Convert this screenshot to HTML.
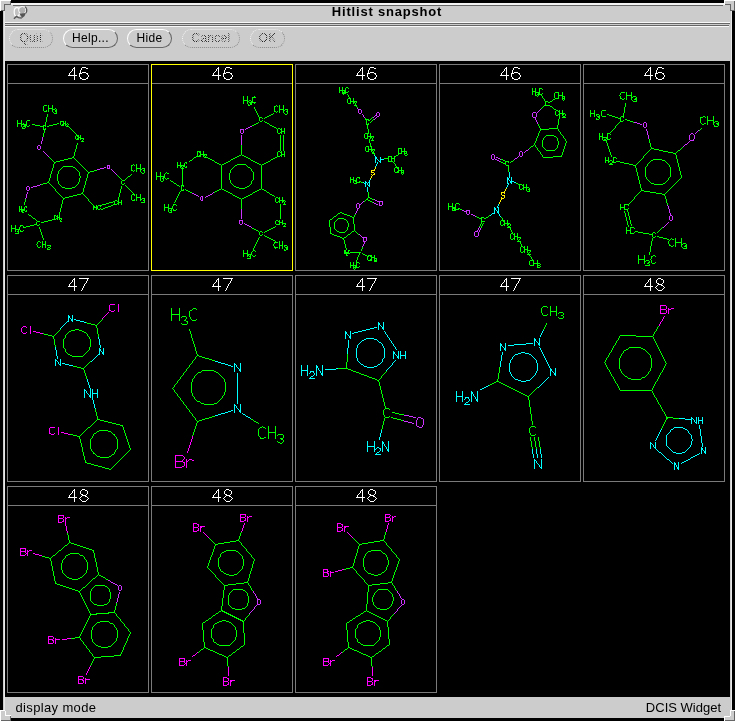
<!DOCTYPE html>
<html><head><meta charset="utf-8"><title>Hitlist snapshot</title>
<style>
html,body{margin:0;padding:0;}
body{width:735px;height:721px;overflow:hidden;background:#000;position:relative;font-family:"Liberation Sans",sans-serif;}
#win{position:absolute;left:3px;top:3px;width:729px;height:715px;background:#cccccc;}
.corner{position:absolute;width:11px;height:11px;background:#cccccc;}
#title{will-change:transform;position:absolute;left:39px;top:4px;width:696px;height:16px;text-align:center;font-weight:bold;font-size:13px;line-height:16px;letter-spacing:0.8px;color:#000;}
.hl{position:absolute;height:1px;}
.btn{will-change:transform;position:absolute;top:29px;height:17px;border-radius:10px;border:1px solid;border-color:#fff #666 #666 #fff;font-size:12px;line-height:17px;text-align:center;color:#000;letter-spacing:0.3px;}
.btn.dis{border-style:dotted;border-color:#f4f4f4 #888 #888 #f4f4f4;}
.btn.dis span{color:transparent;background-image:conic-gradient(#222 25%,#ccc 0 50%,#222 0 75%,#ccc 0);background-size:2px 2px;-webkit-background-clip:text;background-clip:text;}
#canvas{position:absolute;left:5px;top:61px;width:725px;height:636px;background:#000;}
#status{position:absolute;left:3px;top:698px;width:729px;height:20px;font-size:13px;line-height:20px;color:#000;will-change:transform;}
svg{position:absolute;left:0;top:0;}
svg path,svg rect,svg circle{fill:none;shape-rendering:crispEdges;}
svg text{font-family:"Liberation Sans",sans-serif;font-size:18px;fill:#fff;text-anchor:middle;}
</style></head><body>
<div id="win"></div>
<div class="hl" style="left:11px;top:3px;width:713px;height:2px;background:#f4f4f4"></div>
<div class="hl" style="left:13px;top:5px;width:710px;background:#666"></div>
<div class="hl" style="left:3px;top:11px;width:1px;height:700px;background:#ccc"></div>
<div class="hl" style="left:4px;top:11px;width:1px;height:700px;background:#e8e8e8"></div>
<div class="hl" style="left:731px;top:11px;width:1px;height:700px;background:#e8e8e8"></div>
<svg width="735" height="721" viewBox="0 0 735 721" style="z-index:3">
<g id="corners">
<path d="M0 0H11V5H5V11H0Z" style="fill:#cccccc;stroke:none"/>
<path d="M0.5 11V0.5H11" stroke="#fff"/><path d="M10.5 1V4.5H4.5V10.5H1" stroke="#666"/>
<path d="M735 0H724V5H730V11H735Z" style="fill:#cccccc;stroke:none"/>
<path d="M724.5 5V0.5H735" stroke="#fff"/><path d="M725 4.5H730.5V10.5" stroke="#666"/><path d="M734.5 1V11" stroke="#666"/><path d="M731 10.5H735" stroke="#666"/>
<path d="M0 721H11V716H5V710H0Z" style="fill:#cccccc;stroke:none"/>
<path d="M0.5 721V710.5H5" stroke="#fff"/><path d="M5.5 711V715.5H11" stroke="#fff"/><path d="M1 720.5H11" stroke="#666"/><path d="M10.5 716V721" stroke="#666"/>
<path d="M735 721H724V716H730V710H735Z" style="fill:#cccccc;stroke:none"/>
<path d="M730.5 716V710.5H735" stroke="#fff"/><path d="M724.5 721V716.5H730" stroke="#fff"/><path d="M725 720.5H735" stroke="#666"/><path d="M734.5 711V721" stroke="#666"/>
</g>
</svg>
<div id="title">Hitlist snapshot</div>
<svg width="735" height="30" viewBox="0 0 735 30" style="z-index:4">
<g style="shape-rendering:auto">
<ellipse cx="16.9" cy="12" rx="2.7" ry="4.3" style="fill:#c2c2c2;stroke:#fff;stroke-width:1.2;shape-rendering:auto"/>
<circle cx="22.3" cy="10.2" r="3.7" style="fill:#b0b0b0;stroke:#fff;stroke-width:1;shape-rendering:auto"/>
<path d="M25 6.8A4.4 4.4 0 0 1 25.9 13" style="stroke:#555;stroke-width:1.3;shape-rendering:auto"/>
<path d="M19.4 13.4L25.9 13L24.6 16L22.2 17.9L20.6 15.6Z" style="fill:#555;stroke:none;shape-rendering:auto"/>
<path d="M13.9 18.7L16.5 16.4L18.5 17.6L21.8 18" style="stroke:#555;stroke-width:1.4;shape-rendering:auto"/>
</g>
</svg>
<div class="hl" style="left:5px;top:22px;width:725px;background:#f8f8f8"></div>
<div class="hl" style="left:5px;top:23px;width:725px;background:#666"></div>
<div class="hl" style="left:5px;top:25px;width:724px;background:#666"></div>
<div class="hl" style="left:5px;top:26px;width:724px;background:#f8f8f8"></div>
<div class="btn dis" style="left:9px;width:42px;"><span>Quit</span></div>
<div class="btn" style="left:63px;width:53px;">Help...</div>
<div class="btn" style="left:127px;width:43px;">Hide</div>
<div class="btn dis" style="left:182px;width:56px;"><span>Cancel</span></div>
<div class="btn dis" style="left:250px;width:33px;"><span>OK</span></div>
<div id="canvas"></div>
<div id="status"><span style="position:absolute;left:12.5px;top:0;letter-spacing:0.35px">display mode</span><span style="position:absolute;right:11px;top:0;">DCIS Widget</span></div>
<svg width="735" height="721" viewBox="0 0 735 721" style="z-index:2">
<g id="frames">
<rect x="7.5" y="64.5" width="141" height="206" stroke="#7a7a7a"/>
<path d="M7 83.5H149" stroke="#7a7a7a"/>
<rect x="151.5" y="64.5" width="141" height="206" stroke="#ffff00"/>
<path d="M152 83.5H292" stroke="#7a7a7a"/>
<rect x="295.5" y="64.5" width="141" height="206" stroke="#7a7a7a"/>
<path d="M295 83.5H437" stroke="#7a7a7a"/>
<rect x="439.5" y="64.5" width="141" height="206" stroke="#7a7a7a"/>
<path d="M439 83.5H581" stroke="#7a7a7a"/>
<rect x="583.5" y="64.5" width="141" height="206" stroke="#7a7a7a"/>
<path d="M583 83.5H725" stroke="#7a7a7a"/>
<rect x="7.5" y="275.5" width="141" height="206" stroke="#7a7a7a"/>
<path d="M7 294.5H149" stroke="#7a7a7a"/>
<rect x="151.5" y="275.5" width="141" height="206" stroke="#7a7a7a"/>
<path d="M151 294.5H293" stroke="#7a7a7a"/>
<rect x="295.5" y="275.5" width="141" height="206" stroke="#7a7a7a"/>
<path d="M295 294.5H437" stroke="#7a7a7a"/>
<rect x="439.5" y="275.5" width="141" height="206" stroke="#7a7a7a"/>
<path d="M439 294.5H581" stroke="#7a7a7a"/>
<rect x="583.5" y="275.5" width="141" height="206" stroke="#7a7a7a"/>
<path d="M583 294.5H725" stroke="#7a7a7a"/>
<rect x="7.5" y="486.5" width="141" height="206" stroke="#7a7a7a"/>
<path d="M7 505.5H149" stroke="#7a7a7a"/>
<rect x="151.5" y="486.5" width="141" height="206" stroke="#7a7a7a"/>
<path d="M151 505.5H293" stroke="#7a7a7a"/>
<rect x="295.5" y="486.5" width="141" height="206" stroke="#7a7a7a"/>
<path d="M295 505.5H437" stroke="#7a7a7a"/>
</g>
<g id="headers">
<path stroke="#ffffff" d="M82 67.5h4M226 67.5h4M370 67.5h4M514 67.5h4M658 67.5h4M73 68.5h2M86 68.5h2M217 68.5h2M230 68.5h2M361 68.5h2M374 68.5h2M505 68.5h2M518 68.5h2M649 68.5h2M662 68.5h2M82 72.5h4M226 72.5h4M370 72.5h4M514 72.5h4M658 72.5h4M79 73.5h3M86 73.5h2M223 73.5h3M230 73.5h2M367 73.5h3M374 73.5h2M511 73.5h3M518 73.5h2M655 73.5h3M662 73.5h2M68 75.5h9M212 75.5h9M356 75.5h9M500 75.5h9M644 75.5h9M80 78.5h2M86 78.5h2M224 78.5h2M230 78.5h2M368 78.5h2M374 78.5h2M512 78.5h2M518 78.5h2M656 78.5h2M662 78.5h2M82 79.5h4M226 79.5h4M370 79.5h4M514 79.5h4M658 79.5h4M79 278.5h10M223 278.5h10M367 278.5h10M511 278.5h10M658 278.5h3M73 279.5h2M217 279.5h2M361 279.5h2M505 279.5h2M649 279.5h2M661 279.5h2M657 283.5h2M658 284.5h4M661 285.5h2M68 286.5h9M212 286.5h9M356 286.5h9M500 286.5h9M644 286.5h9M658 290.5h4M82 489.5h3M226 489.5h3M370 489.5h3M73 490.5h2M85 490.5h2M217 490.5h2M229 490.5h2M361 490.5h2M373 490.5h2M81 494.5h2M225 494.5h2M369 494.5h2M82 495.5h4M226 495.5h4M370 495.5h4M85 496.5h2M229 496.5h2M373 496.5h2M68 497.5h9M212 497.5h9M356 497.5h9M82 501.5h4M226 501.5h4M370 501.5h4M69.5 73v2M69.5 284v2M69.5 495v2M70.5 72v1M70.5 283v1M70.5 494v1M71.5 71v1M71.5 282v1M71.5 493v1M72.5 69v2M72.5 280v2M72.5 491v2M74.5 67v1M74.5 69v6M74.5 76v4M74.5 278v1M74.5 280v6M74.5 287v4M74.5 489v1M74.5 491v6M74.5 498v4M79.5 74v3M79.5 498v1M80.5 70v3M80.5 77v1M80.5 491v3M80.5 497v1M80.5 499v1M81.5 68v2M81.5 290v1M81.5 490v1M81.5 496v1M81.5 500v1M82.5 288v2M83.5 286v2M84.5 284v2M85.5 283v1M86.5 281v2M86.5 494v1M86.5 500v1M87.5 74v1M87.5 77v1M87.5 279v2M87.5 491v3M87.5 497v1M87.5 499v1M88.5 75v2M88.5 498v1M213.5 73v2M213.5 284v2M213.5 495v2M214.5 72v1M214.5 283v1M214.5 494v1M215.5 71v1M215.5 282v1M215.5 493v1M216.5 69v2M216.5 280v2M216.5 491v2M218.5 67v1M218.5 69v6M218.5 76v4M218.5 278v1M218.5 280v6M218.5 287v4M218.5 489v1M218.5 491v6M218.5 498v4M223.5 74v3M223.5 498v1M224.5 70v3M224.5 77v1M224.5 491v3M224.5 497v1M224.5 499v1M225.5 68v2M225.5 290v1M225.5 490v1M225.5 496v1M225.5 500v1M226.5 288v2M227.5 286v2M228.5 284v2M229.5 283v1M230.5 281v2M230.5 494v1M230.5 500v1M231.5 74v1M231.5 77v1M231.5 279v2M231.5 491v3M231.5 497v1M231.5 499v1M232.5 75v2M232.5 498v1M357.5 73v2M357.5 284v2M357.5 495v2M358.5 72v1M358.5 283v1M358.5 494v1M359.5 71v1M359.5 282v1M359.5 493v1M360.5 69v2M360.5 280v2M360.5 491v2M362.5 67v1M362.5 69v6M362.5 76v4M362.5 278v1M362.5 280v6M362.5 287v4M362.5 489v1M362.5 491v6M362.5 498v4M367.5 74v3M367.5 498v1M368.5 70v3M368.5 77v1M368.5 491v3M368.5 497v1M368.5 499v1M369.5 68v2M369.5 290v1M369.5 490v1M369.5 496v1M369.5 500v1M370.5 288v2M371.5 286v2M372.5 284v2M373.5 283v1M374.5 281v2M374.5 494v1M374.5 500v1M375.5 74v1M375.5 77v1M375.5 279v2M375.5 491v3M375.5 497v1M375.5 499v1M376.5 75v2M376.5 498v1M501.5 73v2M501.5 284v2M502.5 72v1M502.5 283v1M503.5 71v1M503.5 282v1M504.5 69v2M504.5 280v2M506.5 67v1M506.5 69v6M506.5 76v4M506.5 278v1M506.5 280v6M506.5 287v4M511.5 74v3M512.5 70v3M512.5 77v1M513.5 68v2M513.5 290v1M514.5 288v2M515.5 286v2M516.5 284v2M517.5 283v1M518.5 281v2M519.5 74v1M519.5 77v1M519.5 279v2M520.5 75v2M645.5 73v2M645.5 284v2M646.5 72v1M646.5 283v1M647.5 71v1M647.5 282v1M648.5 69v2M648.5 280v2M650.5 67v1M650.5 69v6M650.5 76v4M650.5 278v1M650.5 280v6M650.5 287v4M655.5 74v3M655.5 287v1M656.5 70v3M656.5 77v1M656.5 280v3M656.5 286v1M656.5 288v1M657.5 68v2M657.5 279v1M657.5 285v1M657.5 289v1M662.5 283v1M662.5 289v1M663.5 74v1M663.5 77v1M663.5 280v3M663.5 286v1M663.5 288v1M664.5 75v2M664.5 287v1"/>
</g>
<g id="molecules">
<path stroke="#00ff00" d="M44 105.5h3M48 108.5h5M52 109.5h3M55 110.5h2M44 111.5h3M55 111.5h2M54 113.5h3M27 120.5h3M60 121.5h4M17 123.5h5M57 123.5h2M63 123.5h3M21 124.5h6M32 124.5h3M53 124.5h4M62 124.5h2M65 124.5h2M24 125.5h3M35 125.5h5M43 125.5h3M49 125.5h4M61 125.5h3M23 126.5h3M27 126.5h2M40 126.5h4M47 126.5h2M66 126.5h3M22 128.5h3M43 129.5h3M76 135.5h3M77 136.5h2M78 137.5h3M77 138.5h2M80 138.5h4M76 139.5h3M81 141.5h3M72 157.5h2M68 158.5h4M64 159.5h4M60 160.5h4M56 161.5h4M54 162.5h2M131 165.5h2M63 166.5h10M73 167.5h2M136 168.5h5M142 168.5h3M140 169.5h2M94 170.5h3M131 170.5h2M143 170.5h2M90 171.5h4M88 172.5h2M142 173.5h2M128 176.5h2M122 180.5h3M47 182.5h2M43 183.5h4M41 184.5h2M122 184.5h2M62 187.5h3M72 187.5h3M65 188.5h7M81 193.5h2M77 194.5h4M132 194.5h3M73 195.5h4M69 196.5h4M65 197.5h4M136 197.5h5M63 198.5h2M142 198.5h3M140 199.5h2M115 200.5h2M132 200.5h3M143 200.5h2M113 201.5h2M117 201.5h2M109 202.5h4M118 202.5h4M141 202.5h4M106 203.5h3M117 203.5h2M102 204.5h4M113 204.5h4M98 205.5h4M111 205.5h2M25 206.5h2M93 206.5h2M96 206.5h2M108 206.5h3M93 207.5h5M105 207.5h3M96 208.5h2M103 208.5h2M19 209.5h6M98 209.5h2M101 209.5h2M21 210.5h4M21 211.5h2M25 211.5h2M22 212.5h2M29 215.5h2M54 215.5h2M56 216.5h2M57 217.5h3M33 218.5h2M56 218.5h2M59 218.5h3M52 219.5h4M48 220.5h4M37 221.5h3M44 221.5h4M60 221.5h2M41 222.5h3M34 224.5h3M20 225.5h3M30 225.5h4M37 225.5h2M26 226.5h4M23 227.5h3M11 228.5h5M15 229.5h5M17 231.5h2M20 231.5h3M15 233.5h4M38 241.5h2M42 244.5h4M47 245.5h4M38 247.5h2M48 247.5h2M47 249.5h3M11.5 225v3M11.5 229v3M15.5 225v3M15.5 230v2M17.5 120v3M17.5 124v3M18.5 230v1M18.5 232v1M19.5 206v3M19.5 210v2M19.5 227v2M20.5 226v1M20.5 230v1M21.5 120v3M21.5 125v2M21.5 206v3M22.5 127v1M23.5 123v1M23.5 226v1M23.5 230v1M24.5 202v3M24.5 207v2M25.5 127v1M25.5 199v3M26.5 121v3M26.5 207v1M26.5 210v1M28.5 214v1M29.5 125v1M31.5 216v1M32.5 217v1M35.5 219v1M36.5 220v1M36.5 222v2M36.5 244v1M37.5 242v2M37.5 245v2M39.5 224v1M39.5 227v2M40.5 229v3M40.5 242v1M40.5 246v1M41.5 232v3M42.5 235v3M42.5 241v3M42.5 245v3M43.5 106v5M43.5 127v2M43.5 133v4M43.5 238v2M44.5 130v3M45.5 122v3M45.5 126v1M45.5 128v1M45.5 241v3M45.5 245v3M46.5 110v1M46.5 117v5M47.5 114v3M47.5 248v1M48.5 105v3M48.5 109v3M48.5 181v1M49.5 157v1M49.5 178v3M49.5 183v1M50.5 158v1M50.5 174v4M50.5 184v1M50.5 246v1M50.5 248v1M51.5 159v1M51.5 171v3M51.5 185v1M52.5 105v3M52.5 110v2M52.5 160v1M52.5 168v3M52.5 186v1M53.5 112v1M53.5 161v1M53.5 164v4M53.5 187v1M54.5 163v1M54.5 188v1M54.5 216v3M55.5 108v1M55.5 189v2M56.5 109v1M56.5 112v1M56.5 191v1M57.5 174v7M57.5 192v1M57.5 215v1M57.5 219v1M58.5 171v3M58.5 181v3M58.5 193v1M59.5 170v1M59.5 184v1M59.5 194v1M59.5 212v5M59.5 219v1M60.5 122v3M60.5 169v1M60.5 185v1M60.5 195v1M60.5 208v4M60.5 220v1M61.5 168v1M61.5 186v1M61.5 196v1M61.5 204v4M61.5 219v1M62.5 167v1M62.5 197v1M62.5 200v4M63.5 122v1M63.5 199v1M65.5 121v2M65.5 125v1M67.5 123v1M67.5 125v1M68.5 124v1M69.5 127v1M70.5 128v1M71.5 129v1M72.5 130v1M73.5 131v1M73.5 156v1M74.5 132v1M74.5 152v4M74.5 158v1M75.5 133v1M75.5 136v3M75.5 149v3M75.5 159v1M75.5 168v1M75.5 186v1M76.5 134v1M76.5 145v4M76.5 160v1M76.5 169v1M76.5 185v1M77.5 143v2M77.5 161v1M77.5 170v1M77.5 184v1M78.5 162v1M78.5 171v1M78.5 182v2M79.5 163v1M79.5 172v4M79.5 178v4M80.5 135v2M80.5 139v1M80.5 164v1M80.5 176v2M81.5 165v1M82.5 140v1M82.5 166v1M82.5 192v1M83.5 139v1M83.5 167v1M83.5 188v4M83.5 194v1M84.5 168v1M84.5 185v3M84.5 195v1M85.5 169v1M85.5 181v4M85.5 196v1M86.5 170v1M86.5 178v3M86.5 197v1M87.5 171v1M87.5 174v4M87.5 198v1M88.5 173v1M88.5 199v2M89.5 201v1M90.5 202v1M91.5 203v1M92.5 204v1M93.5 205v1M93.5 208v2M96.5 205v1M96.5 209v1M100.5 206v1M100.5 208v1M114.5 202v2M117.5 175v1M118.5 176v1M118.5 197v4M118.5 204v1M119.5 177v1M119.5 193v4M120.5 178v1M120.5 189v4M121.5 179v1M121.5 181v3M121.5 186v3M121.5 200v2M121.5 203v2M124.5 183v1M125.5 179v1M125.5 185v1M126.5 178v1M126.5 186v1M127.5 177v1M127.5 187v1M128.5 188v1M129.5 189v1M130.5 175v1M130.5 190v1M131.5 166v4M131.5 174v1M131.5 191v1M131.5 195v5M132.5 192v1M133.5 164v1M133.5 171v1M133.5 193v1M134.5 165v1M134.5 170v1M134.5 195v1M134.5 199v1M136.5 164v4M136.5 169v3M136.5 194v3M136.5 198v3M140.5 164v4M140.5 170v2M140.5 194v3M140.5 198v1M140.5 200v1M141.5 172v1M144.5 169v1M144.5 171v2M144.5 199v1M144.5 201v1"/>
<path stroke="#cc33ff" d="M38 145.5h2M38 149.5h2M107 165.5h3M104 167.5h2M100 168.5h4M107 168.5h3M97 169.5h3M37 185.5h3M27 186.5h2M33 186.5h4M31 187.5h2M27 190.5h2M25.5 198v1M26.5 187v3M26.5 194v4M27.5 192v2M29.5 187v3M37.5 146v3M40.5 146v3M40.5 184v1M41.5 141v3M42.5 137v4M43.5 151v1M44.5 152v1M45.5 153v1M46.5 154v1M47.5 155v1M48.5 156v1M107.5 166v2M109.5 166v2M111.5 169v1M112.5 170v1M113.5 171v1M114.5 172v1M115.5 173v1M116.5 174v1"/>
<path stroke="#00ff00" d="M252 97.5h4M243 100.5h5M249 100.5h2M247 101.5h2M251 101.5h2M249 102.5h7M250 103.5h2M250 104.5h2M248 105.5h2M274 106.5h2M279 109.5h5M285 109.5h3M283 110.5h2M274 111.5h2M286 111.5h2M271 114.5h2M285 114.5h2M269 115.5h2M267 116.5h2M259 117.5h3M265 117.5h2M260 121.5h2M265 122.5h2M256 123.5h2M267 123.5h2M254 124.5h2M252 125.5h2M270 125.5h2M272 126.5h2M274 127.5h2M278 128.5h2M280 129.5h2M281 131.5h4M280 132.5h2M278 133.5h2M197 151.5h4M278 151.5h2M199 152.5h2M280 152.5h2M200 154.5h7M281 154.5h4M199 155.5h2M203 155.5h2M239 155.5h2M242 155.5h2M280 155.5h2M196 156.5h5M237 156.5h2M244 156.5h2M277 156.5h3M194 157.5h2M204 157.5h4M235 157.5h2M246 157.5h2M275 157.5h2M208 158.5h2M233 158.5h2M248 158.5h2M273 158.5h2M210 159.5h2M231 159.5h2M271 159.5h2M190 160.5h2M212 160.5h2M251 160.5h2M228 161.5h2M253 161.5h2M268 161.5h2M185 162.5h2M215 162.5h2M226 162.5h2M255 162.5h2M266 162.5h2M217 163.5h2M224 163.5h2M257 163.5h2M264 163.5h2M219 164.5h2M222 164.5h2M237 164.5h9M259 164.5h2M262 164.5h2M177 165.5h8M235 165.5h2M180 166.5h2M183 166.5h2M185 167.5h2M248 167.5h2M181 168.5h3M167 173.5h2M156 176.5h9M163 177.5h2M162 178.5h2M167 178.5h2M161 181.5h2M171 181.5h2M174 183.5h2M177 185.5h2M181 185.5h3M234 186.5h2M247 186.5h2M236 187.5h3M245 187.5h2M239 188.5h6M219 189.5h2M222 189.5h2M259 189.5h2M262 189.5h2M181 190.5h3M186 190.5h2M217 190.5h2M224 190.5h2M257 190.5h2M264 190.5h2M188 191.5h2M215 191.5h2M226 191.5h2M255 191.5h2M190 192.5h2M228 192.5h2M253 192.5h2M267 192.5h2M230 193.5h2M250 194.5h2M270 194.5h2M233 195.5h2M248 195.5h2M272 195.5h2M235 196.5h2M246 196.5h2M237 197.5h2M244 197.5h2M276 197.5h2M239 198.5h2M242 198.5h2M278 198.5h2M279 200.5h6M278 201.5h2M282 201.5h2M276 202.5h2M173 204.5h3M283 204.5h3M164 207.5h5M168 208.5h5M170 210.5h2M173 210.5h3M169 212.5h3M276 220.5h2M278 221.5h2M279 222.5h4M282 223.5h4M276 224.5h4M283 226.5h3M273 227.5h2M252 228.5h2M271 228.5h2M254 229.5h2M269 229.5h2M256 230.5h2M267 230.5h2M260 231.5h2M265 231.5h2M260 235.5h2M265 236.5h2M267 237.5h2M269 238.5h2M271 239.5h2M273 240.5h2M274 242.5h4M279 245.5h4M284 245.5h3M274 247.5h4M285 247.5h3M286 248.5h2M286 249.5h2M253 250.5h2M284 250.5h2M243 253.5h5M247 254.5h5M247 255.5h2M249 256.5h2M253 256.5h2M247 258.5h4M156.5 172v4M156.5 177v3M160.5 172v4M160.5 177v4M163.5 179v2M164.5 174v2M164.5 204v3M164.5 208v3M165.5 173v1M165.5 178v1M166.5 172v1M166.5 179v1M168.5 204v3M168.5 209v3M170.5 180v1M171.5 209v1M171.5 211v1M172.5 206v2M173.5 182v1M173.5 205v1M173.5 209v1M174.5 202v1M175.5 200v2M176.5 184v1M176.5 198v2M176.5 205v1M176.5 209v1M177.5 162v3M177.5 166v2M177.5 196v2M178.5 194v2M179.5 186v1M179.5 192v2M180.5 162v3M180.5 167v1M180.5 191v1M181.5 186v4M182.5 167v1M182.5 169v16M183.5 186v1M183.5 189v1M184.5 163v2M185.5 189v1M186.5 163v1M186.5 166v1M189.5 161v1M192.5 159v1M193.5 158v1M197.5 152v4M200.5 153v1M203.5 151v3M203.5 156v1M205.5 156v1M206.5 155v1M214.5 161v1M214.5 192v1M221.5 165v24M229.5 173v7M230.5 160v1M230.5 170v3M230.5 180v3M231.5 169v1M231.5 183v1M232.5 168v1M232.5 184v1M232.5 194v1M233.5 167v1M233.5 185v1M234.5 166v1M241.5 145v10M241.5 199v10M243.5 96v4M243.5 101v3M243.5 250v3M243.5 254v3M246.5 165v1M247.5 96v4M247.5 102v2M247.5 166v1M247.5 250v3M247.5 256v1M248.5 104v1M249.5 185v1M250.5 159v1M250.5 168v1M250.5 184v1M250.5 255v1M250.5 257v1M251.5 169v2M251.5 181v3M251.5 252v2M252.5 98v3M252.5 171v1M252.5 180v1M252.5 193v1M252.5 251v1M252.5 255v1M253.5 172v8M253.5 248v2M254.5 96v1M254.5 103v1M254.5 107v2M254.5 246v2M255.5 109v2M255.5 244v2M255.5 251v1M255.5 255v1M256.5 111v2M256.5 242v2M257.5 113v2M257.5 240v2M258.5 115v2M258.5 122v1M258.5 231v1M258.5 238v2M259.5 118v3M259.5 232v3M259.5 237v1M261.5 165v24M262.5 118v1M262.5 120v1M262.5 232v1M262.5 234v1M264.5 118v1M264.5 121v1M264.5 232v1M264.5 235v1M266.5 191v1M269.5 124v1M269.5 193v1M270.5 160v1M273.5 113v1M273.5 244v2M274.5 107v4M274.5 196v1M274.5 243v1M274.5 246v1M275.5 198v4M275.5 221v3M275.5 226v1M275.5 241v1M275.5 248v1M276.5 105v1M276.5 112v1M276.5 128v1M277.5 106v1M277.5 111v1M277.5 129v4M277.5 152v4M279.5 105v4M279.5 110v3M279.5 197v1M279.5 199v1M279.5 202v1M279.5 220v1M279.5 223v1M279.5 241v4M279.5 246v3M280.5 135v16M280.5 204v15M281.5 128v1M281.5 130v1M281.5 133v1M281.5 151v1M281.5 153v1M281.5 156v1M282.5 197v3M282.5 202v1M282.5 220v2M282.5 224v1M282.5 241v4M282.5 246v3M283.5 105v4M283.5 111v2M283.5 135v16M284.5 113v1M284.5 128v3M284.5 132v2M284.5 151v3M284.5 155v2M284.5 202v2M284.5 225v1M284.5 246v1M284.5 249v1M285.5 201v1M285.5 224v1M287.5 110v1M287.5 112v2M287.5 246v1"/>
<path stroke="#cc33ff" d="M250 126.5h2M248 127.5h2M246 128.5h2M240 129.5h4M241 133.5h2M192 193.5h2M194 194.5h2M210 194.5h2M196 195.5h2M208 195.5h2M201 196.5h2M206 196.5h2M201 200.5h2M239 220.5h4M240 224.5h2M245 224.5h2M247 225.5h2M249 226.5h2M198.5 196v1M200.5 197v3M202.5 197v3M205.5 197v1M212.5 193v1M213.5 192v1M239.5 221v3M240.5 130v3M241.5 135v10M241.5 209v10M242.5 221v3M243.5 130v3M244.5 223v1M245.5 129v1M251.5 227v1"/>
<path stroke="#00ff00" d="M346 87.5h2M339 90.5h7M344 91.5h2M342 92.5h6M342 93.5h4M348 98.5h3M350 101.5h7M353 102.5h2M348 103.5h3M354 105.5h3M365 119.5h4M368 120.5h2M366 124.5h3M365 133.5h4M367 136.5h7M370 137.5h2M365 138.5h3M371 140.5h3M366 146.5h3M370 146.5h2M398 148.5h4M368 149.5h7M371 150.5h2M366 151.5h3M401 151.5h6M372 152.5h2M372 153.5h3M398 153.5h4M404 153.5h3M396 155.5h2M405 155.5h2M388 156.5h4M394 156.5h2M384 158.5h5M391 158.5h4M388 161.5h5M395 167.5h4M397 168.5h2M398 170.5h6M397 171.5h2M395 172.5h4M401 172.5h3M357 177.5h3M350 179.5h4M353 180.5h4M355 181.5h2M359 181.5h2M356 182.5h4M361 182.5h2M354 183.5h3M368 197.5h2M370 198.5h2M366 199.5h2M372 199.5h2M368 200.5h2M370 201.5h2M340 212.5h2M338 213.5h2M342 213.5h2M344 214.5h3M347 215.5h3M334 216.5h2M350 216.5h2M352 217.5h2M338 218.5h6M330 219.5h2M344 219.5h2M337 231.5h2M352 231.5h2M339 232.5h6M330 233.5h2M332 234.5h2M348 234.5h2M334 235.5h3M337 236.5h3M340 237.5h2M344 237.5h2M342 238.5h2M344 250.5h2M348 250.5h2M344 251.5h2M344 252.5h5M350 252.5h11M344 253.5h6M363 254.5h2M346 255.5h2M365 255.5h2M368 255.5h4M367 256.5h2M370 256.5h2M371 257.5h4M374 258.5h3M370 259.5h2M368 260.5h4M374 260.5h3M374 261.5h3M356 262.5h3M350 265.5h7M355 266.5h2M353 267.5h6M329.5 220v7M330.5 227v6M332.5 218v1M333.5 217v1M334.5 222v7M335.5 221v1M335.5 229v1M336.5 215v1M336.5 220v1M336.5 230v1M337.5 214v1M337.5 219v1M339.5 87v3M339.5 91v2M342.5 87v3M342.5 91v1M343.5 94v1M343.5 239v1M344.5 240v4M345.5 88v2M345.5 231v1M345.5 244v4M346.5 220v1M346.5 230v1M346.5 236v1M346.5 248v2M346.5 254v1M347.5 94v1M347.5 99v4M347.5 221v2M347.5 227v3M347.5 235v1M348.5 88v1M348.5 91v1M348.5 95v2M348.5 223v4M348.5 251v1M349.5 97v1M350.5 99v2M350.5 102v1M350.5 177v2M350.5 180v3M350.5 233v1M350.5 262v3M350.5 266v2M351.5 232v1M353.5 98v3M353.5 103v1M353.5 177v2M353.5 181v2M353.5 218v6M353.5 262v3M353.5 266v1M353.5 268v1M354.5 215v2M354.5 224v7M354.5 269v1M355.5 103v2M355.5 214v1M355.5 231v1M355.5 268v1M356.5 102v1M356.5 106v1M356.5 178v2M356.5 232v1M356.5 260v2M356.5 263v2M357.5 107v1M357.5 233v1M357.5 257v3M358.5 234v1M358.5 255v2M359.5 178v1M359.5 253v2M359.5 263v1M359.5 266v1M361.5 249v2M362.5 247v2M362.5 253v1M364.5 134v4M364.5 201v1M365.5 118v1M365.5 147v4M365.5 200v1M366.5 120v4M367.5 125v4M367.5 134v2M367.5 137v1M367.5 198v1M367.5 257v3M368.5 123v1M368.5 129v4M368.5 147v2M368.5 150v1M368.5 192v5M369.5 139v4M370.5 119v1M370.5 122v1M370.5 133v3M370.5 138v1M370.5 143v3M371.5 118v1M371.5 121v1M371.5 147v2M371.5 151v1M371.5 258v1M372.5 117v1M372.5 120v1M372.5 138v2M372.5 202v1M373.5 119v1M373.5 137v1M373.5 151v1M374.5 150v1M374.5 154v1M374.5 255v2M374.5 259v1M376.5 259v1M388.5 157v1M388.5 159v2M391.5 157v1M391.5 159v2M393.5 162v1M394.5 157v1M394.5 159v3M394.5 163v1M394.5 168v4M395.5 164v2M396.5 166v1M398.5 149v4M398.5 154v1M398.5 169v1M401.5 149v2M401.5 152v1M401.5 167v3M401.5 171v1M401.5 173v1M402.5 174v1M403.5 171v1M403.5 173v1M404.5 148v3M404.5 152v1M404.5 154v1M406.5 152v1M407.5 154v1"/>
<path stroke="#cc33ff" d="M358 109.5h3M377 112.5h2M359 113.5h2M375 115.5h2M377 116.5h2M375 200.5h2M377 201.5h6M357 203.5h2M374 203.5h2M359 204.5h2M376 204.5h2M379 205.5h3M357 208.5h2M362 237.5h5M363 241.5h3M355.5 213v1M356.5 204v4M356.5 211v2M357.5 108v1M357.5 209v2M358.5 110v3M359.5 205v3M359.5 234v1M360.5 235v1M361.5 110v3M361.5 203v1M361.5 236v1M362.5 114v1M362.5 202v1M362.5 246v1M363.5 115v2M363.5 201v1M363.5 238v3M363.5 244v2M364.5 117v1M364.5 242v2M366.5 238v3M373.5 117v1M373.5 202v1M374.5 116v1M374.5 119v1M374.5 199v1M375.5 118v1M376.5 113v2M376.5 117v1M379.5 113v3M379.5 202v3M382.5 202v3"/>
<path stroke="#00ffff" d="M375 157.5h2M375 158.5h2M380 159.5h4M379 161.5h2M365 182.5h2M368 182.5h2M364 183.5h2M368 185.5h2M363.5 182v1M365.5 181v1M365.5 184v3M367.5 183v2M367.5 187v5M369.5 180v2M369.5 183v2M369.5 186v1M370.5 179v1M374.5 155v1M375.5 156v1M375.5 159v4M375.5 166v1M376.5 164v2M377.5 159v1M377.5 162v2M378.5 160v1M380.5 157v2M380.5 160v1M380.5 162v1"/>
<path stroke="#fff000" d="M371 170.5h4M371 172.5h3M373 174.5h2M370.5 178v1M371.5 171v1M371.5 174v1M371.5 176v2M372.5 175v1M374.5 169v1M374.5 173v1M375.5 167v2"/>
<path stroke="#00ff00" d="M539 88.5h3M532 91.5h4M535 92.5h5M555 92.5h4M538 93.5h2M537 94.5h5M535 95.5h2M558 95.5h5M562 96.5h3M555 98.5h4M562 98.5h3M553 99.5h2M545 101.5h3M550 101.5h2M548 102.5h2M544 105.5h6M550 106.5h2M554 109.5h2M556 110.5h2M558 111.5h2M559 113.5h6M558 114.5h2M562 114.5h2M556 115.5h2M563 116.5h2M562 117.5h4M549 128.5h9M540 129.5h9M546 135.5h8M554 136.5h2M531 146.5h2M546 150.5h9M553 156.5h9M543 157.5h10M501 159.5h2M503 160.5h2M505 161.5h4M511 161.5h2M501 162.5h2M503 163.5h3M506 165.5h3M516 183.5h2M518 184.5h4M522 185.5h2M523 187.5h6M522 188.5h2M520 189.5h2M528 189.5h2M527 191.5h3M456 203.5h3M448 206.5h5M452 207.5h4M452 208.5h4M458 208.5h2M454 209.5h5M460 209.5h2M452 210.5h4M477 217.5h2M481 217.5h3M486 217.5h2M479 218.5h3M484 218.5h2M501 220.5h4M481 221.5h4M503 221.5h2M504 223.5h6M503 224.5h2M507 224.5h2M501 225.5h2M508 226.5h2M507 227.5h4M511 233.5h2M513 234.5h2M514 236.5h4M517 237.5h4M513 238.5h2M511 239.5h2M517 241.5h4M521 246.5h2M523 247.5h2M524 249.5h4M527 250.5h4M523 251.5h2M521 252.5h2M527 254.5h4M530 260.5h4M533 263.5h7M530 265.5h4M537 265.5h3M537 267.5h3M448.5 203v3M448.5 207v3M452.5 203v3M452.5 209v1M455.5 204v3M459.5 204v1M476.5 216v1M479.5 226v1M480.5 224v2M481.5 219v2M481.5 222v2M481.5 226v2M482.5 224v2M483.5 223v1M488.5 216v1M489.5 215v1M500.5 161v1M500.5 221v4M501.5 217v1M502.5 218v2M504.5 222v1M504.5 225v1M505.5 162v1M505.5 164v1M507.5 220v3M507.5 225v1M508.5 162v1M508.5 166v6M510.5 162v1M510.5 224v2M510.5 228v2M510.5 234v5M511.5 230v2M512.5 232v1M513.5 160v1M514.5 233v1M514.5 235v1M514.5 237v1M514.5 239v1M517.5 233v3M517.5 238v2M518.5 240v1M519.5 185v4M519.5 239v1M520.5 238v1M520.5 242v2M520.5 247v5M521.5 244v2M523.5 184v1M523.5 186v1M523.5 189v1M524.5 246v1M524.5 248v1M524.5 250v1M524.5 252v1M526.5 184v3M526.5 188v3M527.5 246v3M527.5 251v2M528.5 253v1M529.5 148v1M529.5 188v1M529.5 190v1M529.5 252v1M529.5 255v1M529.5 261v4M530.5 147v1M530.5 251v1M530.5 256v1M531.5 257v2M532.5 88v3M532.5 92v3M532.5 259v1M533.5 145v1M533.5 261v2M533.5 264v1M534.5 143v2M535.5 88v3M535.5 93v2M535.5 141v2M535.5 145v2M536.5 138v3M536.5 147v1M537.5 96v1M537.5 136v2M537.5 148v2M537.5 260v3M537.5 264v1M537.5 266v1M538.5 95v1M538.5 124v2M538.5 133v3M538.5 150v1M539.5 89v3M539.5 126v2M539.5 131v2M539.5 151v1M540.5 128v1M540.5 130v1M540.5 152v2M540.5 264v1M540.5 266v1M541.5 95v1M541.5 108v1M541.5 154v1M542.5 89v1M542.5 93v1M542.5 96v2M542.5 107v1M542.5 140v7M542.5 155v2M543.5 98v1M543.5 106v1M543.5 138v2M543.5 147v1M544.5 99v2M544.5 137v1M544.5 148v1M545.5 102v3M545.5 136v1M545.5 149v1M552.5 100v1M552.5 107v1M553.5 108v1M554.5 93v5M555.5 111v4M555.5 149v1M556.5 137v1M556.5 148v1M557.5 125v3M557.5 138v3M557.5 145v3M558.5 93v2M558.5 96v2M558.5 119v6M558.5 129v2M558.5 141v4M559.5 110v1M559.5 112v1M559.5 115v4M559.5 131v1M560.5 132v2M561.5 134v1M561.5 155v1M562.5 92v3M562.5 97v1M562.5 99v1M562.5 110v3M562.5 115v1M562.5 135v1M562.5 152v3M563.5 100v1M563.5 136v2M563.5 149v3M564.5 97v1M564.5 99v1M564.5 138v1M564.5 146v3M565.5 114v2M565.5 139v2M565.5 143v3M566.5 141v2"/>
<path stroke="#cc33ff" d="M533 112.5h3M533 117.5h3M526 150.5h2M520 151.5h2M492 154.5h2M520 156.5h2M496 157.5h2M498 158.5h2M515 158.5h2M492 159.5h2M495 159.5h2M497 160.5h2M462 210.5h2M466 210.5h4M464 211.5h3M467 214.5h2M471 214.5h2M473 215.5h2M475 231.5h3M475 236.5h3M466.5 212v2M469.5 211v3M474.5 232v4M475.5 216v1M477.5 230v1M478.5 228v2M478.5 232v4M479.5 227v1M479.5 230v2M480.5 228v2M491.5 155v4M494.5 155v4M499.5 161v1M500.5 159v1M514.5 159v1M517.5 157v1M518.5 156v1M519.5 152v4M522.5 152v4M524.5 152v1M525.5 151v1M528.5 149v1M532.5 113v4M535.5 118v2M536.5 113v4M536.5 120v2M537.5 112v1M537.5 122v2M538.5 111v1M539.5 110v1M540.5 109v1"/>
<path stroke="#00ffff" d="M507 178.5h2M507 179.5h2M510 181.5h4M510 182.5h2M514 182.5h2M507 183.5h2M497 207.5h2M494 208.5h2M494 209.5h2M497 211.5h2M497 212.5h2M492 213.5h3M490.5 215v1M491.5 214v1M494.5 207v1M494.5 210v3M496.5 210v1M497.5 206v1M498.5 204v2M498.5 208v3M498.5 213v1M499.5 214v2M500.5 216v1M506.5 187v1M507.5 177v1M507.5 180v3M507.5 185v2M508.5 184v1M509.5 172v6M509.5 180v1M511.5 177v4M511.5 183v1"/>
<path stroke="#fff000" d="M501 192.5h4M502 195.5h3M501 198.5h3M499.5 202v2M500.5 200v2M501.5 193v2M501.5 197v1M501.5 199v1M504.5 191v1M504.5 193v1M504.5 196v2M505.5 189v2M506.5 188v1"/>
<path stroke="#00ff00" d="M621 92.5h4M626 95.5h6M633 96.5h3M631 97.5h2M620 98.5h2M635 98.5h2M622 99.5h2M634 99.5h3M633 101.5h4M602 110.5h4M590 113.5h5M596 114.5h3M607 114.5h2M609 115.5h3M597 116.5h3M602 116.5h4M612 116.5h3M621 116.5h3M703 116.5h2M598 117.5h2M615 117.5h3M700 117.5h3M618 118.5h3M596 119.5h3M625 119.5h2M627 120.5h3M707 120.5h7M620 121.5h3M630 121.5h3M715 121.5h3M713 122.5h2M704 123.5h2M716 123.5h3M702 124.5h2M717 124.5h2M714 126.5h4M607 133.5h3M599 136.5h4M602 137.5h6M606 138.5h2M604 139.5h2M607 139.5h3M603 140.5h4M651 148.5h3M654 149.5h5M659 150.5h4M678 150.5h2M663 151.5h5M668 152.5h5M673 153.5h3M613 157.5h3M653 159.5h9M605 160.5h4M610 160.5h2M651 160.5h2M662 160.5h3M608 161.5h2M612 161.5h2M616 161.5h4M612 162.5h4M620 162.5h4M610 163.5h2M624 163.5h5M609 164.5h4M629 164.5h4M633 165.5h3M651 183.5h3M663 183.5h2M654 184.5h9M641 190.5h3M644 191.5h6M650 192.5h6M656 193.5h6M662 194.5h3M624 204.5h5M620 207.5h5M624 209.5h4M630 227.5h4M626 230.5h5M635 231.5h3M638 232.5h5M653 232.5h2M630 233.5h4M643 233.5h6M649 234.5h4M657 236.5h2M653 237.5h2M659 237.5h4M663 238.5h4M667 239.5h2M672 239.5h2M675 242.5h7M683 243.5h3M681 244.5h2M669 245.5h2M685 245.5h2M671 246.5h2M684 246.5h3M683 248.5h4M653 255.5h2M651 256.5h2M638 259.5h7M646 260.5h3M644 261.5h2M648 262.5h2M647 263.5h2M652 263.5h3M645 265.5h5M590.5 110v3M590.5 114v3M594.5 110v3M594.5 114v3M596.5 115v1M596.5 118v1M599.5 115v1M599.5 118v1M599.5 133v3M599.5 137v3M601.5 111v5M602.5 133v3M602.5 138v2M605.5 157v3M605.5 161v2M606.5 141v2M607.5 134v3M607.5 143v3M608.5 146v3M608.5 157v3M608.5 162v1M609.5 149v3M610.5 132v1M610.5 134v1M610.5 138v1M610.5 152v3M611.5 131v1M611.5 155v2M612.5 130v1M613.5 129v1M613.5 158v3M614.5 128v1M615.5 126v2M616.5 125v1M616.5 158v1M617.5 124v1M618.5 123v1M619.5 95v1M619.5 122v1M620.5 93v2M620.5 96v2M620.5 117v1M620.5 119v2M620.5 204v3M620.5 208v2M623.5 113v3M623.5 117v1M623.5 120v1M624.5 98v1M624.5 107v6M624.5 205v2M624.5 208v1M624.5 211v2M625.5 103v4M625.5 213v4M626.5 92v3M626.5 96v4M626.5 217v4M626.5 227v3M626.5 231v3M627.5 210v2M627.5 221v4M628.5 205v1M628.5 208v1M628.5 212v4M628.5 225v2M629.5 203v1M629.5 216v4M630.5 202v1M630.5 220v4M630.5 228v2M630.5 231v2M631.5 92v3M631.5 96v1M631.5 98v2M631.5 201v1M631.5 224v2M632.5 100v1M632.5 200v1M633.5 122v1M633.5 199v1M634.5 197v2M634.5 228v1M634.5 232v1M635.5 166v2M635.5 196v1M636.5 97v1M636.5 100v1M636.5 164v1M636.5 168v4M636.5 195v1M637.5 163v1M637.5 172v4M637.5 194v1M638.5 162v1M638.5 176v4M638.5 193v1M638.5 255v4M638.5 260v4M639.5 161v1M639.5 180v4M639.5 192v1M640.5 160v1M640.5 184v4M640.5 191v1M641.5 159v1M641.5 188v2M642.5 158v1M643.5 156v2M644.5 155v1M644.5 255v4M644.5 260v1M644.5 262v2M645.5 154v1M645.5 167v10M646.5 153v1M646.5 166v1M646.5 177v2M647.5 152v1M647.5 164v2M647.5 179v1M648.5 151v1M648.5 163v1M648.5 180v1M649.5 139v4M649.5 150v1M649.5 162v1M649.5 181v1M649.5 252v3M649.5 261v1M649.5 264v1M650.5 143v4M650.5 149v1M650.5 161v1M650.5 182v1M650.5 246v6M650.5 259v1M651.5 147v1M651.5 241v5M651.5 257v2M651.5 260v3M652.5 233v1M652.5 235v2M652.5 238v3M655.5 233v1M655.5 236v1M655.5 256v1M655.5 262v1M657.5 232v1M658.5 231v1M659.5 230v1M660.5 229v1M661.5 228v1M662.5 227v1M664.5 195v1M665.5 161v1M665.5 182v1M665.5 193v1M665.5 196v3M666.5 162v1M666.5 181v1M666.5 192v1M666.5 199v4M667.5 163v1M667.5 180v1M667.5 191v1M667.5 203v2M668.5 164v1M668.5 178v2M668.5 190v1M668.5 241v3M669.5 165v2M669.5 177v1M669.5 189v1M669.5 240v1M669.5 244v1M670.5 167v10M670.5 188v1M670.5 239v1M671.5 187v1M671.5 238v1M672.5 186v1M673.5 185v1M673.5 245v1M674.5 184v1M675.5 154v1M675.5 183v1M675.5 238v4M675.5 243v4M676.5 152v1M676.5 155v4M676.5 182v1M677.5 151v1M677.5 159v4M677.5 181v1M678.5 163v4M678.5 180v1M679.5 167v4M679.5 179v1M680.5 149v1M680.5 171v4M680.5 178v1M681.5 148v1M681.5 175v3M681.5 238v4M681.5 243v1M681.5 245v2M682.5 147v1M682.5 247v1M686.5 244v1M686.5 247v1M699.5 130v1M700.5 118v5M700.5 129v1M701.5 123v1M701.5 128v1M705.5 117v1M707.5 116v4M707.5 121v4M713.5 116v4M713.5 121v1M713.5 123v2M714.5 125v1M718.5 122v1M718.5 125v1"/>
<path stroke="#cc33ff" d="M634 122.5h3M644 122.5h2M637 123.5h3M640 124.5h2M644 127.5h2M691 133.5h2M690 140.5h4M685 144.5h2M670 215.5h2M670 220.5h2M643.5 123v4M646.5 123v4M646.5 129v2M647.5 131v4M648.5 135v4M663.5 227v1M664.5 226v1M665.5 225v1M666.5 224v1M667.5 205v1M667.5 223v1M668.5 206v3M668.5 222v1M669.5 209v4M669.5 216v4M670.5 213v2M672.5 216v4M683.5 146v1M684.5 145v1M687.5 143v1M688.5 142v1M689.5 135v5M689.5 141v1M690.5 134v1M693.5 134v1M693.5 139v1M694.5 135v4M695.5 133v1M696.5 132v1M697.5 131v1M698.5 130v1"/>
<path stroke="#00ff00" d="M87 323.5h4M91 324.5h4M95 325.5h2M75 329.5h4M71 330.5h4M79 330.5h3M69 331.5h2M82 331.5h2M84 332.5h2M44 334.5h4M48 335.5h4M52 336.5h2M68 354.5h2M70 355.5h2M72 356.5h11M73 366.5h4M77 367.5h4M81 368.5h3M97 419.5h3M100 420.5h4M104 421.5h4M108 422.5h4M112 423.5h4M116 424.5h4M120 425.5h3M88 427.5h2M99 430.5h9M97 431.5h2M108 431.5h3M94 433.5h2M70 434.5h3M113 434.5h2M73 435.5h4M77 436.5h3M93 453.5h2M112 454.5h2M97 456.5h3M109 456.5h2M100 457.5h9M85 462.5h2M87 463.5h4M91 464.5h3M94 465.5h4M98 466.5h4M102 467.5h3M105 468.5h4M109 469.5h2M43.5 333v1M53.5 337v2M54.5 335v1M54.5 339v6M55.5 334v1M55.5 345v2M56.5 333v1M57.5 332v1M58.5 331v1M59.5 330v1M60.5 329v1M63.5 339v9M64.5 338v1M64.5 348v1M65.5 335v3M65.5 349v3M66.5 334v1M66.5 352v1M67.5 333v1M67.5 353v1M68.5 332v1M79.5 437v2M80.5 435v1M80.5 439v4M81.5 434v1M81.5 443v4M82.5 433v1M82.5 447v5M83.5 355v1M83.5 369v1M83.5 432v1M83.5 452v4M84.5 354v1M84.5 367v1M84.5 370v3M84.5 431v1M84.5 456v4M85.5 353v1M85.5 366v1M85.5 373v3M85.5 430v1M85.5 460v2M86.5 322v1M86.5 333v1M86.5 352v1M86.5 365v1M86.5 376v3M86.5 429v1M87.5 334v2M87.5 351v1M87.5 364v1M87.5 428v1M88.5 336v1M88.5 350v1M88.5 363v1M89.5 337v2M89.5 347v3M89.5 362v1M90.5 339v8M90.5 361v1M90.5 426v1M90.5 439v10M91.5 425v1M91.5 438v1M91.5 449v2M92.5 424v1M92.5 436v2M92.5 451v1M93.5 423v1M93.5 434v2M93.5 452v1M94.5 422v1M95.5 409v3M95.5 421v1M95.5 454v1M96.5 326v2M96.5 412v4M96.5 420v1M96.5 432v1M96.5 455v1M97.5 324v1M97.5 328v6M97.5 416v3M98.5 323v1M98.5 334v3M99.5 322v1M100.5 321v1M101.5 320v1M102.5 319v1M111.5 432v1M111.5 455v1M111.5 468v1M112.5 433v1M112.5 467v1M113.5 466v1M114.5 435v1M114.5 452v2M114.5 465v1M115.5 436v1M115.5 450v2M115.5 464v1M116.5 437v2M116.5 449v1M116.5 463v1M117.5 439v10M117.5 462v1M118.5 461v1M119.5 460v1M120.5 459v1M121.5 458v1M122.5 426v1M122.5 457v1M123.5 427v3M123.5 456v1M124.5 430v3M124.5 455v1M125.5 433v3M125.5 454v1M126.5 436v3M126.5 453v1M127.5 439v3M127.5 452v1M128.5 442v3M128.5 451v1M129.5 445v3M129.5 450v1M130.5 448v2"/>
<path stroke="#00ffff" d="M68 316.5h2M68 317.5h2M71 319.5h2M74 319.5h2M71 320.5h2M76 320.5h4M67 321.5h2M80 321.5h4M84 322.5h2M99 349.5h2M99 350.5h2M102 352.5h2M102 353.5h2M98 354.5h2M55 360.5h2M62 363.5h3M59 364.5h2M65 364.5h4M69 365.5h4M84 390.5h2M92 393.5h6M89 395.5h2M89 396.5h2M55.5 347v3M55.5 359v1M55.5 361v5M56.5 350v6M57.5 356v3M57.5 361v1M58.5 362v2M60.5 328v1M60.5 359v5M60.5 365v1M61.5 327v1M62.5 326v1M63.5 325v1M64.5 324v1M65.5 323v1M66.5 322v1M68.5 315v1M68.5 318v3M70.5 318v1M72.5 315v4M72.5 321v1M84.5 389v1M84.5 391v7M86.5 391v2M87.5 379v3M87.5 393v1M88.5 382v3M88.5 394v1M89.5 385v3M90.5 388v7M90.5 397v1M91.5 361v1M92.5 360v1M92.5 389v4M92.5 394v6M93.5 359v1M93.5 400v4M94.5 358v1M94.5 404v4M95.5 357v1M95.5 408v1M96.5 356v1M97.5 355v1M97.5 389v4M97.5 394v4M98.5 337v2M99.5 339v6M99.5 348v1M99.5 351v3M100.5 345v3M101.5 351v1M103.5 348v4M103.5 354v1"/>
<path stroke="#ff00ff" d="M110 304.5h5M109 310.5h2M111 311.5h3M23 326.5h3M33 331.5h3M36 332.5h4M23 333.5h3M40 333.5h3M50 427.5h5M61 432.5h3M49 433.5h2M64 433.5h4M51 434.5h3M68 434.5h2M21.5 328v4M22.5 327v1M22.5 332v1M26.5 327v1M26.5 332v1M30.5 326v8M49.5 428v5M54.5 433v1M58.5 427v8M102.5 318v1M103.5 317v1M104.5 316v1M105.5 315v1M106.5 314v1M107.5 313v1M108.5 312v1M109.5 305v5M114.5 310v1M118.5 304v8"/>
<path stroke="#00ff00" d="M193 308.5h3M190 310.5h2M171 314.5h9M182 316.5h4M184 320.5h2M192 320.5h4M186 321.5h2M182 324.5h5M197 355.5h2M199 356.5h3M202 357.5h3M205 358.5h4M209 359.5h3M212 360.5h3M202 370.5h12M214 371.5h2M198 372.5h3M216 372.5h2M197 401.5h3M201 403.5h3M214 403.5h3M204 404.5h10M212 416.5h3M209 417.5h3M205 418.5h4M202 419.5h3M251 419.5h2M199 420.5h3M197 421.5h2M254 421.5h2M256 422.5h2M260 427.5h2M263 427.5h2M268 432.5h8M278 434.5h5M264 437.5h2M260 438.5h4M280 438.5h3M281 439.5h2M278 442.5h2M280 443.5h2M171.5 308v6M171.5 315v6M172.5 388v1M173.5 387v1M173.5 389v1M174.5 385v2M174.5 390v2M175.5 384v1M175.5 392v1M176.5 383v1M176.5 393v1M177.5 381v2M177.5 394v2M178.5 380v1M178.5 396v1M179.5 308v6M179.5 315v6M179.5 379v1M179.5 397v1M180.5 377v2M180.5 398v2M181.5 317v1M181.5 323v1M181.5 376v1M181.5 400v1M182.5 375v1M182.5 401v1M183.5 373v2M183.5 402v2M184.5 372v1M184.5 404v1M185.5 319v1M185.5 371v1M185.5 405v1M186.5 317v2M186.5 369v2M186.5 406v2M187.5 322v2M187.5 368v1M187.5 408v1M188.5 367v1M188.5 409v1M189.5 311v6M189.5 329v2M189.5 365v2M189.5 410v2M190.5 317v2M190.5 331v3M190.5 364v1M190.5 412v1M191.5 319v1M191.5 334v4M191.5 363v1M191.5 382v11M191.5 413v1M192.5 309v1M192.5 338v3M192.5 361v2M192.5 379v3M192.5 393v3M192.5 414v2M192.5 435v1M193.5 341v3M193.5 360v1M193.5 378v1M193.5 396v1M193.5 416v1M193.5 432v3M194.5 344v3M194.5 359v1M194.5 376v2M194.5 397v2M194.5 417v1M194.5 429v3M195.5 347v4M195.5 357v2M195.5 375v1M195.5 399v1M195.5 418v2M195.5 426v3M196.5 309v1M196.5 319v1M196.5 351v3M196.5 356v1M196.5 374v1M196.5 400v1M196.5 420v1M196.5 423v3M197.5 354v1M197.5 373v1M197.5 422v1M200.5 402v1M201.5 371v1M217.5 402v1M218.5 373v1M218.5 401v1M219.5 374v1M219.5 400v1M220.5 375v1M220.5 399v1M221.5 376v1M221.5 398v1M222.5 377v1M222.5 396v2M223.5 378v1M223.5 395v1M224.5 379v3M224.5 392v3M225.5 382v10M253.5 420v1M258.5 423v1M258.5 429v7M259.5 428v1M259.5 436v1M260.5 437v1M262.5 426v1M265.5 428v1M268.5 426v6M268.5 433v6M275.5 426v6M275.5 433v6M277.5 435v1M277.5 441v1M282.5 442v1M283.5 435v3M283.5 440v2"/>
<path stroke="#00ffff" d="M215 361.5h3M218 362.5h3M221 363.5h4M225 364.5h3M234 364.5h2M228 365.5h3M231 366.5h2M239 369.5h2M239 370.5h2M234 405.5h2M231 410.5h2M239 410.5h2M228 411.5h3M239 411.5h2M225 412.5h3M221 413.5h4M218 414.5h3M243 414.5h2M215 415.5h3M246 416.5h2M248 417.5h2M234.5 363v1M234.5 365v7M234.5 404v1M234.5 406v7M236.5 365v2M236.5 406v2M237.5 367v1M237.5 373v31M237.5 408v1M238.5 368v1M238.5 409v1M240.5 363v6M240.5 371v1M240.5 404v6M240.5 412v1M242.5 413v1M245.5 415v1M250.5 418v1"/>
<path stroke="#ff00ff" d="M175 455.5h8M189 459.5h3M192 460.5h2M175 461.5h8M186 461.5h2M183 462.5h2M182 466.5h2M175 467.5h7M175.5 456v5M175.5 462v5M182.5 460v1M183.5 456v1M183.5 459v1M184.5 457v2M184.5 463v3M186.5 459v2M186.5 462v6M187.5 451v2M188.5 448v3M188.5 460v1M189.5 445v3M190.5 442v3M191.5 439v3M192.5 436v3"/>
<path stroke="#00ffff" d="M378 323.5h2M378 324.5h2M374 327.5h3M382 327.5h2M370 328.5h4M382 328.5h2M366 329.5h4M362 330.5h4M358 331.5h4M345 332.5h2M354 332.5h4M345 333.5h2M352 333.5h2M349 336.5h2M349 337.5h2M366 338.5h8M364 339.5h2M374 339.5h3M362 340.5h2M379 342.5h2M393 352.5h2M393 353.5h2M400 355.5h6M397 356.5h2M397 357.5h2M361 364.5h2M378 364.5h2M316 366.5h2M364 366.5h3M374 366.5h3M316 367.5h2M367 367.5h7M336 368.5h2M325 369.5h11M301 370.5h7M310 371.5h4M321 373.5h2M321 374.5h2M311 376.5h2M309 378.5h6M382 442.5h2M382 443.5h2M367 446.5h8M377 447.5h2M379 448.5h2M374 449.5h2M387 449.5h2M387 450.5h2M377 452.5h2M375 454.5h6M301.5 365v5M301.5 371v5M307.5 365v5M307.5 371v5M309.5 373v1M310.5 372v1M310.5 377v1M313.5 372v1M313.5 375v1M314.5 373v2M316.5 365v1M316.5 368v8M318.5 368v2M319.5 370v1M320.5 371v2M322.5 365v8M322.5 375v1M345.5 331v1M345.5 334v5M347.5 334v1M347.5 348v6M348.5 335v1M348.5 340v8M350.5 331v5M350.5 338v1M356.5 348v10M357.5 345v3M357.5 358v3M358.5 344v1M358.5 361v1M359.5 343v1M359.5 362v1M360.5 342v1M360.5 363v1M361.5 341v1M363.5 365v1M367.5 441v5M367.5 447v5M374.5 441v5M374.5 447v2M374.5 450v2M376.5 448v1M376.5 453v1M377.5 340v1M377.5 365v1M378.5 322v1M378.5 325v5M378.5 341v1M379.5 437v3M379.5 451v1M380.5 325v1M380.5 363v1M380.5 433v4M380.5 449v2M381.5 326v1M381.5 343v1M381.5 362v1M381.5 430v3M382.5 344v2M382.5 359v3M382.5 441v1M382.5 444v8M383.5 322v5M383.5 329v1M383.5 346v2M383.5 358v1M384.5 331v1M384.5 348v10M384.5 444v2M385.5 332v2M385.5 446v1M386.5 334v1M386.5 370v1M386.5 447v2M387.5 335v2M387.5 369v1M388.5 337v1M388.5 368v1M388.5 441v8M388.5 451v1M389.5 338v2M389.5 367v1M390.5 340v1M390.5 366v1M391.5 341v2M391.5 365v1M392.5 343v1M392.5 363v2M393.5 344v2M393.5 351v1M393.5 354v5M393.5 362v1M394.5 346v1M394.5 361v1M395.5 347v2M395.5 354v1M395.5 360v1M396.5 349v1M396.5 355v1M398.5 351v5M398.5 358v1M400.5 351v4M400.5 356v3M405.5 351v4M405.5 356v3"/>
<path stroke="#00ff00" d="M338 368.5h10M348 369.5h3M351 370.5h2M353 371.5h3M356 372.5h3M359 373.5h2M361 374.5h3M364 375.5h3M367 376.5h2M369 377.5h3M372 378.5h3M375 379.5h2M377 380.5h2M385 408.5h4M392 412.5h3M395 413.5h4M399 414.5h5M385 417.5h4M391 417.5h2M393 418.5h4M397 419.5h4M401 420.5h2M346.5 362v6M347.5 354v8M378.5 381v1M379.5 379v1M379.5 382v4M380.5 378v1M380.5 386v4M381.5 376v2M381.5 390v4M381.5 429v1M382.5 375v1M382.5 394v4M382.5 425v4M383.5 374v1M383.5 398v4M383.5 410v5M383.5 421v4M384.5 373v1M384.5 402v4M384.5 409v1M384.5 415v2M384.5 418v3M385.5 372v1M385.5 406v2M386.5 371v1M389.5 409v1M389.5 416v1"/>
<path stroke="#cc33ff" d="M404 415.5h5M409 416.5h4M413 417.5h3M418 417.5h3M421 418.5h2M404 421.5h4M408 422.5h4M412 423.5h2M417 426.5h2M419 427.5h3M403.5 420v1M416.5 420v6M417.5 418v2M422.5 425v2M423.5 419v6"/>
<path stroke="#00ffff" d="M534 339.5h2M534 340.5h2M526 343.5h7M538 343.5h2M500 344.5h2M514 344.5h12M538 344.5h2M500 345.5h2M508 345.5h6M504 348.5h2M504 349.5h2M521 352.5h4M518 353.5h3M525 353.5h4M515 354.5h3M529 354.5h2M550 369.5h2M550 370.5h2M554 373.5h2M554 374.5h2M515 379.5h3M518 380.5h3M526 380.5h4M521 381.5h5M486 386.5h2M484 387.5h2M482 388.5h2M480 389.5h2M471 392.5h2M471 393.5h2M456 396.5h7M465 397.5h4M476 399.5h2M476 400.5h2M466 402.5h2M464 404.5h6M534 460.5h2M540 467.5h2M456.5 391v5M456.5 397v5M462.5 391v5M462.5 397v5M464.5 399v1M465.5 398v1M465.5 403v1M468.5 398v1M468.5 401v1M469.5 399v2M471.5 391v1M471.5 394v8M473.5 394v2M474.5 396v1M475.5 397v2M477.5 391v8M477.5 401v1M488.5 385v1M500.5 343v1M500.5 346v5M500.5 361v6M501.5 355v6M502.5 346v1M502.5 352v3M503.5 347v1M505.5 343v5M505.5 350v1M509.5 363v9M510.5 360v3M510.5 372v2M511.5 359v1M511.5 374v2M512.5 357v2M512.5 376v1M513.5 356v1M513.5 377v1M514.5 355v1M514.5 378v1M530.5 379v1M531.5 355v1M531.5 378v1M532.5 356v1M532.5 377v1M532.5 449v5M533.5 357v1M533.5 376v1M533.5 454v4M534.5 338v1M534.5 341v5M534.5 358v1M534.5 375v1M534.5 459v1M534.5 461v8M535.5 359v1M535.5 373v2M536.5 341v1M536.5 360v3M536.5 371v2M536.5 449v5M536.5 461v2M537.5 342v1M537.5 363v8M537.5 454v4M537.5 463v1M538.5 387v1M538.5 464v1M539.5 338v5M539.5 345v1M539.5 347v1M539.5 386v1M539.5 465v2M540.5 335v2M540.5 348v2M540.5 385v1M540.5 449v5M541.5 333v2M541.5 350v2M541.5 384v1M541.5 454v4M541.5 459v8M541.5 468v1M542.5 331v2M542.5 352v2M542.5 383v1M543.5 330v1M543.5 354v2M543.5 382v1M544.5 356v2M544.5 381v1M545.5 358v2M545.5 380v1M546.5 360v2M546.5 379v1M547.5 362v2M547.5 378v1M548.5 364v2M548.5 377v1M549.5 366v2M550.5 368v1M550.5 371v5M552.5 371v1M553.5 372v1M555.5 368v5M555.5 375v1"/>
<path stroke="#00ff00" d="M543 306.5h4M550 311.5h7M559 312.5h4M543 315.5h4M561 315.5h2M559 318.5h4M496 381.5h3M494 382.5h2M499 382.5h2M492 383.5h2M501 383.5h2M490 384.5h2M503 384.5h2M505 385.5h2M507 386.5h2M509 387.5h2M511 388.5h2M513 389.5h2M515 390.5h2M517 391.5h2M519 392.5h2M521 393.5h2M523 394.5h2M525 395.5h2M527 396.5h2M531 426.5h4M531 435.5h4M489.5 385v1M497.5 379v2M498.5 373v6M499.5 367v6M528.5 397v3M529.5 395v1M529.5 400v7M529.5 428v5M530.5 394v1M530.5 407v7M530.5 427v1M530.5 433v2M530.5 437v4M531.5 393v1M531.5 414v7M531.5 441v6M532.5 392v1M532.5 421v4M532.5 447v2M533.5 391v1M534.5 390v1M534.5 437v4M535.5 389v1M535.5 427v1M535.5 434v1M535.5 441v6M536.5 388v1M536.5 447v2M537.5 387v1M538.5 437v4M539.5 441v6M540.5 447v2M541.5 308v5M542.5 307v1M542.5 313v2M543.5 329v1M544.5 327v2M545.5 325v2M546.5 323v2M547.5 307v1M547.5 314v1M550.5 306v5M550.5 312v4M556.5 306v5M556.5 312v4M558.5 313v1M558.5 317v1M563.5 313v2M563.5 316v2"/>
<path stroke="#00ff00" d="M620 335.5h16M636 336.5h17M629 347.5h12M641 348.5h2M626 349.5h2M643 349.5h2M624 350.5h2M625 376.5h2M642 377.5h3M628 378.5h3M631 379.5h10M620 390.5h32M666 417.5h7M666 418.5h2M673 418.5h6M604.5 362v1M605.5 360v2M605.5 363v2M606.5 358v2M606.5 365v2M607.5 357v1M607.5 367v2M608.5 355v2M608.5 369v1M609.5 353v2M609.5 370v2M610.5 352v1M610.5 372v2M611.5 350v2M611.5 374v2M612.5 348v2M612.5 376v1M613.5 346v2M613.5 377v2M614.5 345v1M614.5 379v2M615.5 343v2M615.5 381v2M616.5 341v2M616.5 383v1M617.5 340v1M617.5 384v2M618.5 338v2M618.5 386v2M619.5 336v2M619.5 358v11M619.5 388v2M620.5 356v2M620.5 369v2M621.5 354v2M621.5 371v2M622.5 353v1M622.5 373v1M623.5 351v2M623.5 374v1M624.5 375v1M627.5 377v1M628.5 348v1M641.5 378v1M645.5 350v1M645.5 376v1M646.5 351v1M646.5 375v1M647.5 352v1M647.5 374v1M648.5 353v1M648.5 372v2M649.5 354v1M649.5 371v1M650.5 355v3M650.5 368v3M651.5 358v10M652.5 388v2M652.5 391v2M653.5 334v2M653.5 337v2M653.5 386v2M653.5 393v2M654.5 332v2M654.5 339v2M654.5 384v2M654.5 395v2M655.5 331v1M655.5 341v2M655.5 382v2M655.5 397v1M656.5 329v2M656.5 343v2M656.5 381v1M656.5 398v2M657.5 327v2M657.5 345v2M657.5 379v2M657.5 400v2M658.5 326v1M658.5 347v2M658.5 377v2M658.5 402v2M659.5 349v2M659.5 375v2M659.5 404v1M660.5 351v2M660.5 373v2M660.5 405v2M661.5 353v2M661.5 372v1M661.5 407v2M661.5 428v1M662.5 355v2M662.5 370v2M662.5 409v2M662.5 426v2M663.5 357v2M663.5 368v2M663.5 411v1M663.5 424v2M664.5 359v2M664.5 366v2M664.5 412v2M664.5 422v2M665.5 361v2M665.5 364v2M665.5 414v2M665.5 420v2M666.5 363v1M666.5 416v1M666.5 419v1"/>
<path stroke="#ff00ff" d="M660 305.5h6M671 308.5h3M660 309.5h6M668 309.5h3M660 313.5h6M659.5 324v2M660.5 306v3M660.5 310v3M660.5 322v2M661.5 321v1M662.5 319v2M663.5 317v2M664.5 316v1M666.5 306v3M666.5 310v3M668.5 308v1M668.5 310v4"/>
<path stroke="#00ffff" d="M679 418.5h6M691 418.5h2M685 419.5h7M698 420.5h5M695 422.5h2M674 427.5h9M683 428.5h2M671 429.5h2M685 429.5h2M650 443.5h2M654 447.5h2M701 448.5h2M701 449.5h2M704 451.5h2M659 452.5h2M673 452.5h3M682 452.5h3M704 452.5h2M676 453.5h6M697 454.5h2M695 455.5h2M693 456.5h2M691 457.5h2M667 459.5h2M688 459.5h2M686 460.5h2M684 461.5h2M682 462.5h2M674 463.5h2M674 464.5h2M677 467.5h2M677 468.5h2M650.5 442v1M650.5 444v5M652.5 444v1M653.5 445v2M655.5 440v1M655.5 442v5M655.5 448v1M656.5 438v2M656.5 449v1M657.5 436v2M657.5 450v1M658.5 434v2M658.5 451v1M659.5 432v2M660.5 430v2M661.5 429v1M661.5 453v1M662.5 454v1M663.5 455v1M664.5 456v1M665.5 457v1M666.5 435v11M666.5 458v1M667.5 434v1M667.5 446v1M668.5 433v1M668.5 447v1M669.5 432v1M669.5 448v1M669.5 460v1M670.5 430v2M670.5 449v1M670.5 461v1M671.5 450v1M671.5 462v1M672.5 451v1M672.5 463v1M673.5 428v1M674.5 462v1M674.5 465v5M676.5 465v2M678.5 462v5M678.5 469v1M681.5 463v1M685.5 451v1M686.5 450v1M687.5 430v1M687.5 449v1M688.5 431v2M688.5 448v1M689.5 433v1M689.5 447v1M690.5 434v1M690.5 445v2M690.5 458v1M691.5 417v1M691.5 420v4M691.5 435v4M691.5 441v4M692.5 439v2M693.5 419v1M694.5 420v2M696.5 417v5M696.5 423v1M698.5 417v3M698.5 421v3M699.5 425v4M699.5 453v1M700.5 429v7M701.5 436v7M701.5 447v1M701.5 450v4M702.5 417v3M702.5 421v3M702.5 443v4M703.5 450v1M705.5 447v4M705.5 453v1"/>
<path stroke="#00ff00" d="M69 542.5h2M71 543.5h3M74 544.5h3M65 545.5h2M77 545.5h3M80 546.5h3M83 547.5h3M86 548.5h3M89 549.5h3M59 550.5h2M92 550.5h2M70 553.5h9M68 554.5h2M53 555.5h2M66 555.5h2M80 555.5h3M42 556.5h3M45 557.5h4M49 558.5h2M99 575.5h2M101 576.5h2M67 577.5h2M80 577.5h2M103 577.5h2M69 578.5h3M78 578.5h2M93 578.5h2M72 579.5h6M106 579.5h2M55 583.5h2M57 584.5h3M60 585.5h3M95 585.5h10M63 586.5h3M105 586.5h2M66 587.5h3M83 587.5h2M69 588.5h3M72 589.5h3M75 590.5h3M78 591.5h2M94 604.5h3M104 604.5h3M97 605.5h7M108 612.5h7M96 613.5h13M90 614.5h7M100 621.5h9M97 622.5h3M110 623.5h3M75 637.5h5M71 638.5h4M96 645.5h2M98 646.5h3M108 646.5h3M101 647.5h7M114 655.5h7M101 656.5h13M94 657.5h7M50.5 559v2M51.5 557v1M51.5 561v5M52.5 556v1M52.5 566v5M53.5 571v5M54.5 576v5M55.5 554v1M55.5 581v2M56.5 553v1M57.5 552v1M58.5 551v1M61.5 549v1M61.5 563v7M62.5 548v1M62.5 560v3M62.5 570v3M63.5 547v1M63.5 559v1M63.5 573v1M64.5 546v1M64.5 558v1M64.5 574v1M65.5 556v2M65.5 575v1M66.5 576v1M67.5 533v2M67.5 544v1M68.5 535v5M68.5 543v1M69.5 540v2M79.5 554v1M79.5 592v1M79.5 636v1M80.5 590v1M80.5 593v2M80.5 634v2M80.5 638v2M81.5 589v1M81.5 595v2M81.5 632v2M81.5 640v1M82.5 576v1M82.5 588v1M82.5 597v2M82.5 630v2M82.5 641v1M83.5 556v1M83.5 575v1M83.5 599v2M83.5 628v2M83.5 642v2M84.5 557v2M84.5 574v1M84.5 601v2M84.5 626v2M84.5 644v1M85.5 559v1M85.5 573v1M85.5 586v1M85.5 603v2M85.5 624v2M85.5 645v1M86.5 560v2M86.5 570v3M86.5 585v1M86.5 605v2M86.5 622v2M86.5 646v2M87.5 562v8M87.5 584v1M87.5 607v2M87.5 620v2M87.5 648v1M88.5 583v1M88.5 609v2M88.5 618v2M88.5 649v1M89.5 582v1M89.5 611v2M89.5 616v2M89.5 650v2M90.5 581v1M90.5 591v10M90.5 613v1M90.5 615v1M90.5 652v1M90.5 665v1M91.5 580v1M91.5 589v2M91.5 601v1M91.5 630v9M91.5 653v1M91.5 663v2M92.5 579v1M92.5 588v1M92.5 602v1M92.5 627v3M92.5 639v3M92.5 654v2M92.5 661v2M93.5 551v2M93.5 587v1M93.5 603v1M93.5 626v1M93.5 642v1M93.5 656v1M93.5 659v2M94.5 553v5M94.5 586v1M94.5 625v1M94.5 643v1M94.5 658v1M95.5 558v4M95.5 577v1M95.5 624v1M95.5 644v1M96.5 562v5M96.5 576v1M96.5 623v1M97.5 567v5M97.5 575v1M98.5 572v3M105.5 578v1M107.5 587v1M107.5 603v1M108.5 588v1M108.5 602v1M109.5 589v3M109.5 599v3M109.5 622v1M110.5 592v7M111.5 645v1M112.5 644v1M113.5 624v1M113.5 643v1M114.5 610v2M114.5 625v2M114.5 642v1M115.5 606v4M115.5 613v1M115.5 627v1M115.5 641v1M116.5 603v3M116.5 614v2M116.5 628v2M116.5 638v3M117.5 616v1M117.5 630v8M118.5 617v1M119.5 618v1M120.5 619v2M120.5 654v1M121.5 621v1M121.5 652v2M122.5 622v1M122.5 650v2M123.5 623v1M123.5 647v3M124.5 624v2M124.5 645v2M125.5 626v1M125.5 643v2M126.5 627v1M126.5 641v2M127.5 628v1M127.5 638v3M128.5 629v2M128.5 636v2M129.5 631v1M129.5 634v2M130.5 632v2"/>
<path stroke="#cc33ff" d="M108 580.5h2M111 582.5h2M113 583.5h2M115 584.5h2M119 585.5h2M119 590.5h2M110.5 581v1M116.5 602v1M117.5 585v1M117.5 598v4M118.5 586v4M118.5 594v4M119.5 592v2M121.5 586v4"/>
<path stroke="#ff00ff" d="M58 515.5h6M67 517.5h3M58 518.5h5M65 518.5h2M62 521.5h2M58 522.5h4M20 548.5h6M29 550.5h3M20 551.5h6M27 551.5h2M26 553.5h2M33 553.5h2M35 554.5h4M20 555.5h5M39 555.5h3M48 636.5h5M67 638.5h4M48 639.5h5M55 639.5h5M62 639.5h5M52 640.5h2M48 643.5h5M78 676.5h5M78 679.5h5M85 679.5h5M82 680.5h2M78 683.5h5M20.5 549v2M20.5 552v3M25.5 549v2M25.5 552v1M25.5 554v1M27.5 550v1M27.5 552v1M27.5 554v2M48.5 637v2M48.5 640v3M53.5 637v2M53.5 641v2M55.5 638v1M55.5 640v4M58.5 516v2M58.5 519v3M63.5 516v2M63.5 519v2M65.5 517v1M65.5 519v7M66.5 526v5M67.5 531v2M78.5 677v2M78.5 680v3M83.5 677v2M83.5 681v2M85.5 678v1M85.5 680v4M86.5 673v2M87.5 671v2M88.5 669v2M89.5 667v2M90.5 666v1"/>
<path stroke="#00ff00" d="M236 540.5h3M230 541.5h6M224 542.5h6M218 543.5h6M215 544.5h3M226 550.5h10M224 551.5h2M236 551.5h2M222 552.5h2M221 571.5h2M224 573.5h2M226 574.5h3M234 574.5h3M229 575.5h5M244 582.5h4M236 583.5h8M228 584.5h8M224 585.5h4M233 589.5h10M243 590.5h2M232 608.5h3M242 608.5h3M235 609.5h7M221 610.5h2M219 611.5h2M222 611.5h3M224 612.5h3M216 613.5h2M226 613.5h3M228 614.5h3M213 615.5h2M230 615.5h3M232 616.5h3M234 617.5h3M209 618.5h2M236 618.5h3M238 619.5h3M206 620.5h2M222 620.5h4M240 620.5h3M219 621.5h3M226 621.5h3M242 621.5h2M203 622.5h2M217 622.5h2M229 622.5h2M215 623.5h2M214 642.5h2M217 644.5h2M219 645.5h11M241 646.5h2M204 647.5h2M206 648.5h2M201 649.5h2M208 649.5h2M237 649.5h2M210 650.5h3M213 651.5h2M215 652.5h2M233 652.5h2M217 653.5h2M219 654.5h3M222 655.5h2M229 655.5h2M224 656.5h2M226 657.5h2M198.5 652v1M199.5 651v1M200.5 650v1M202.5 623v7M203.5 630v12M203.5 648v1M204.5 642v5M205.5 621v1M207.5 566v2M208.5 563v3M208.5 568v1M208.5 619v1M209.5 538v1M209.5 560v3M209.5 569v1M210.5 539v1M210.5 557v3M210.5 570v1M211.5 540v1M211.5 555v2M211.5 571v1M211.5 617v1M211.5 629v9M212.5 541v1M212.5 552v3M212.5 572v1M212.5 616v1M212.5 628v1M212.5 638v1M213.5 542v1M213.5 549v3M213.5 573v1M213.5 625v3M213.5 639v3M214.5 543v1M214.5 546v3M214.5 574v1M214.5 624v1M215.5 545v1M215.5 575v2M215.5 614v1M216.5 577v1M216.5 643v1M217.5 578v1M218.5 558v9M218.5 579v1M218.5 612v1M219.5 557v1M219.5 567v2M219.5 580v1M220.5 554v3M220.5 569v2M220.5 581v1M221.5 553v1M221.5 582v1M221.5 606v4M222.5 583v1M222.5 598v8M223.5 572v1M223.5 584v1M223.5 590v8M224.5 586v4M227.5 658v8M228.5 595v10M228.5 656v1M228.5 666v1M229.5 593v2M229.5 605v1M230.5 592v1M230.5 606v1M230.5 644v1M231.5 591v1M231.5 607v1M231.5 623v1M231.5 643v1M231.5 654v1M232.5 590v1M232.5 624v1M232.5 642v1M232.5 653v1M233.5 625v1M233.5 641v1M234.5 626v1M234.5 640v1M235.5 627v3M235.5 637v3M235.5 651v1M236.5 630v7M236.5 650v1M237.5 573v1M238.5 539v1M238.5 552v1M238.5 572v1M239.5 536v3M239.5 541v1M239.5 553v1M239.5 571v1M239.5 648v1M240.5 533v3M240.5 542v1M240.5 554v1M240.5 570v1M240.5 647v1M241.5 532v1M241.5 543v2M241.5 555v1M241.5 569v1M242.5 545v1M242.5 556v3M242.5 566v3M243.5 546v1M243.5 559v7M243.5 622v11M243.5 645v1M244.5 547v1M244.5 620v1M244.5 633v12M245.5 548v1M245.5 591v1M245.5 607v1M245.5 618v2M246.5 549v2M246.5 592v1M246.5 606v1M246.5 617v1M247.5 551v1M247.5 581v1M247.5 593v3M247.5 603v3M247.5 616v1M248.5 552v1M248.5 578v3M248.5 583v2M248.5 596v7M248.5 615v1M249.5 553v1M249.5 574v4M249.5 585v1M249.5 614v1M250.5 554v1M250.5 571v3M250.5 586v2M251.5 555v2M251.5 568v3M251.5 588v2M252.5 557v1M252.5 564v4M252.5 590v1M253.5 558v1M253.5 561v3M254.5 559v2"/>
<path stroke="#cc33ff" d="M257 599.5h3M257 604.5h3M249.5 613v1M250.5 612v1M251.5 611v1M252.5 610v1M253.5 591v2M253.5 609v1M254.5 593v1M254.5 607v2M255.5 594v2M255.5 606v1M256.5 596v2M256.5 605v1M257.5 598v1M257.5 600v4M260.5 600v4"/>
<path stroke="#ff00ff" d="M240 514.5h6M249 516.5h3M240 517.5h5M247 517.5h2M244 520.5h2M240 521.5h4M193 523.5h4M197 524.5h2M200 526.5h5M193 527.5h5M200 527.5h2M197 530.5h2M193 531.5h4M193 655.5h2M179 658.5h6M188 660.5h3M179 661.5h6M186 661.5h2M185 663.5h2M179 665.5h5M223 677.5h4M227 678.5h2M230 680.5h5M223 681.5h5M230 681.5h2M227 684.5h2M223 685.5h4M179.5 659v2M179.5 662v3M184.5 659v2M184.5 662v1M184.5 664v1M186.5 660v1M186.5 662v1M186.5 664v2M192.5 656v1M193.5 524v3M193.5 528v3M195.5 654v1M196.5 653v1M197.5 652v1M198.5 525v2M198.5 528v2M200.5 528v4M203.5 532v1M204.5 533v1M205.5 534v1M206.5 535v1M207.5 536v1M208.5 537v1M223.5 678v3M223.5 682v3M228.5 667v9M228.5 679v2M228.5 682v2M230.5 682v4M240.5 515v2M240.5 518v3M241.5 531v1M242.5 528v3M243.5 525v3M244.5 523v2M245.5 515v2M245.5 518v2M247.5 516v1M247.5 518v4"/>
<path stroke="#00ff00" d="M380 540.5h4M374 541.5h6M368 542.5h6M362 543.5h6M359 544.5h3M371 550.5h10M368 551.5h3M383 553.5h2M350 567.5h3M346 568.5h4M344 569.5h2M382 572.5h2M368 573.5h3M371 574.5h3M378 574.5h3M374 575.5h4M388 582.5h4M380 583.5h8M372 584.5h8M368 585.5h4M378 589.5h10M377 608.5h3M387 608.5h2M380 609.5h7M364 611.5h2M367 611.5h2M369 612.5h2M361 613.5h2M371 613.5h2M373 614.5h2M358 615.5h2M375 615.5h2M356 616.5h2M377 616.5h2M379 617.5h2M353 618.5h2M381 618.5h2M383 619.5h2M350 620.5h2M366 620.5h4M385 620.5h2M363 621.5h3M370 621.5h3M347 622.5h2M361 622.5h2M373 622.5h2M359 623.5h2M358 642.5h2M361 644.5h2M363 645.5h11M387 645.5h2M348 647.5h2M350 648.5h2M383 648.5h2M345 649.5h2M352 649.5h2M354 650.5h3M357 651.5h2M379 651.5h2M359 652.5h2M361 653.5h2M376 653.5h2M363 654.5h3M366 655.5h2M368 656.5h2M372 656.5h2M370 657.5h2M342.5 652v1M343.5 651v1M344.5 650v1M346.5 623v7M347.5 630v12M347.5 648v1M348.5 642v5M349.5 621v1M352.5 566v1M352.5 619v1M353.5 538v1M353.5 563v3M353.5 568v1M354.5 539v1M354.5 559v4M354.5 569v1M355.5 540v1M355.5 556v3M355.5 570v1M355.5 617v1M355.5 629v9M356.5 541v1M356.5 553v3M356.5 571v2M356.5 628v1M356.5 638v1M357.5 542v1M357.5 549v4M357.5 573v1M357.5 625v3M357.5 639v3M358.5 543v1M358.5 546v3M358.5 574v1M358.5 624v1M359.5 545v1M359.5 575v1M360.5 576v1M360.5 614v1M360.5 643v1M361.5 577v1M362.5 578v1M363.5 558v9M363.5 579v1M363.5 612v1M364.5 556v2M364.5 567v3M364.5 580v2M365.5 554v2M365.5 570v1M365.5 582v1M366.5 553v1M366.5 571v1M366.5 583v1M366.5 604v7M367.5 552v1M367.5 572v1M367.5 584v1M367.5 592v12M368.5 586v6M371.5 658v8M372.5 597v5M372.5 666v1M373.5 595v2M373.5 602v3M374.5 593v2M374.5 605v1M374.5 644v1M374.5 655v1M375.5 592v1M375.5 606v1M375.5 623v1M375.5 643v1M375.5 654v1M376.5 591v1M376.5 607v1M376.5 624v1M376.5 642v1M377.5 590v1M377.5 625v1M377.5 641v1M378.5 626v1M378.5 640v1M378.5 652v1M379.5 627v3M379.5 637v3M380.5 630v7M381.5 551v1M381.5 573v1M381.5 650v1M382.5 552v1M382.5 649v1M383.5 539v1M384.5 535v4M384.5 541v1M384.5 571v1M385.5 532v3M385.5 542v1M385.5 554v1M385.5 570v1M385.5 647v1M386.5 543v2M386.5 555v2M386.5 567v3M386.5 646v1M387.5 545v1M387.5 557v3M387.5 565v2M387.5 621v6M388.5 546v1M388.5 560v5M388.5 590v1M388.5 620v1M388.5 627v12M389.5 547v1M389.5 591v1M389.5 607v1M389.5 619v1M389.5 639v6M390.5 548v1M390.5 592v1M390.5 606v1M390.5 617v2M391.5 549v2M391.5 581v1M391.5 593v1M391.5 604v2M391.5 616v1M392.5 551v1M392.5 578v3M392.5 583v2M392.5 594v3M392.5 601v3M392.5 615v1M393.5 552v1M393.5 575v3M393.5 585v1M393.5 597v4M393.5 614v1M394.5 553v1M394.5 572v3M394.5 586v2M395.5 554v1M395.5 570v2M395.5 588v2M396.5 555v2M396.5 567v3M396.5 590v1M397.5 557v1M397.5 564v3M398.5 558v1M398.5 561v3M399.5 559v2"/>
<path stroke="#cc33ff" d="M402 599.5h2M402 604.5h2M394.5 613v1M395.5 612v1M396.5 611v1M397.5 591v2M397.5 609v2M398.5 593v1M398.5 608v1M399.5 594v2M399.5 607v1M400.5 596v2M400.5 606v1M401.5 598v1M401.5 600v4M401.5 605v1M404.5 600v4"/>
<path stroke="#ff00ff" d="M385 514.5h5M394 516.5h2M385 517.5h5M392 517.5h2M389 520.5h2M385 521.5h4M337 523.5h4M341 524.5h2M344 526.5h5M337 527.5h5M344 527.5h2M341 530.5h2M337 531.5h4M323 569.5h5M342 569.5h2M338 570.5h4M327 571.5h2M335 571.5h3M323 572.5h5M330 572.5h4M327 573.5h2M323 576.5h5M337 655.5h2M323 658.5h6M332 660.5h3M323 661.5h6M330 661.5h2M329 663.5h2M323 665.5h5M367 677.5h4M371 678.5h2M374 680.5h5M367 681.5h5M374 681.5h2M371 684.5h2M367 685.5h4M323.5 570v2M323.5 573v3M323.5 659v2M323.5 662v3M327.5 570v1M328.5 574v2M328.5 659v2M328.5 662v1M328.5 664v1M330.5 571v1M330.5 573v4M330.5 660v1M330.5 662v1M330.5 664v2M336.5 656v1M337.5 524v3M337.5 528v3M339.5 654v1M340.5 653v1M341.5 652v1M342.5 525v2M342.5 528v2M344.5 528v4M347.5 532v1M348.5 533v1M349.5 534v1M350.5 535v1M351.5 536v1M352.5 537v1M367.5 678v3M367.5 682v3M372.5 667v9M372.5 679v2M372.5 682v2M374.5 682v4M385.5 515v2M385.5 518v3M386.5 529v3M387.5 525v4M388.5 523v2M389.5 516v1M390.5 515v1M390.5 518v2M392.5 516v1M392.5 518v4"/>
</g>
</svg>
</body></html>
